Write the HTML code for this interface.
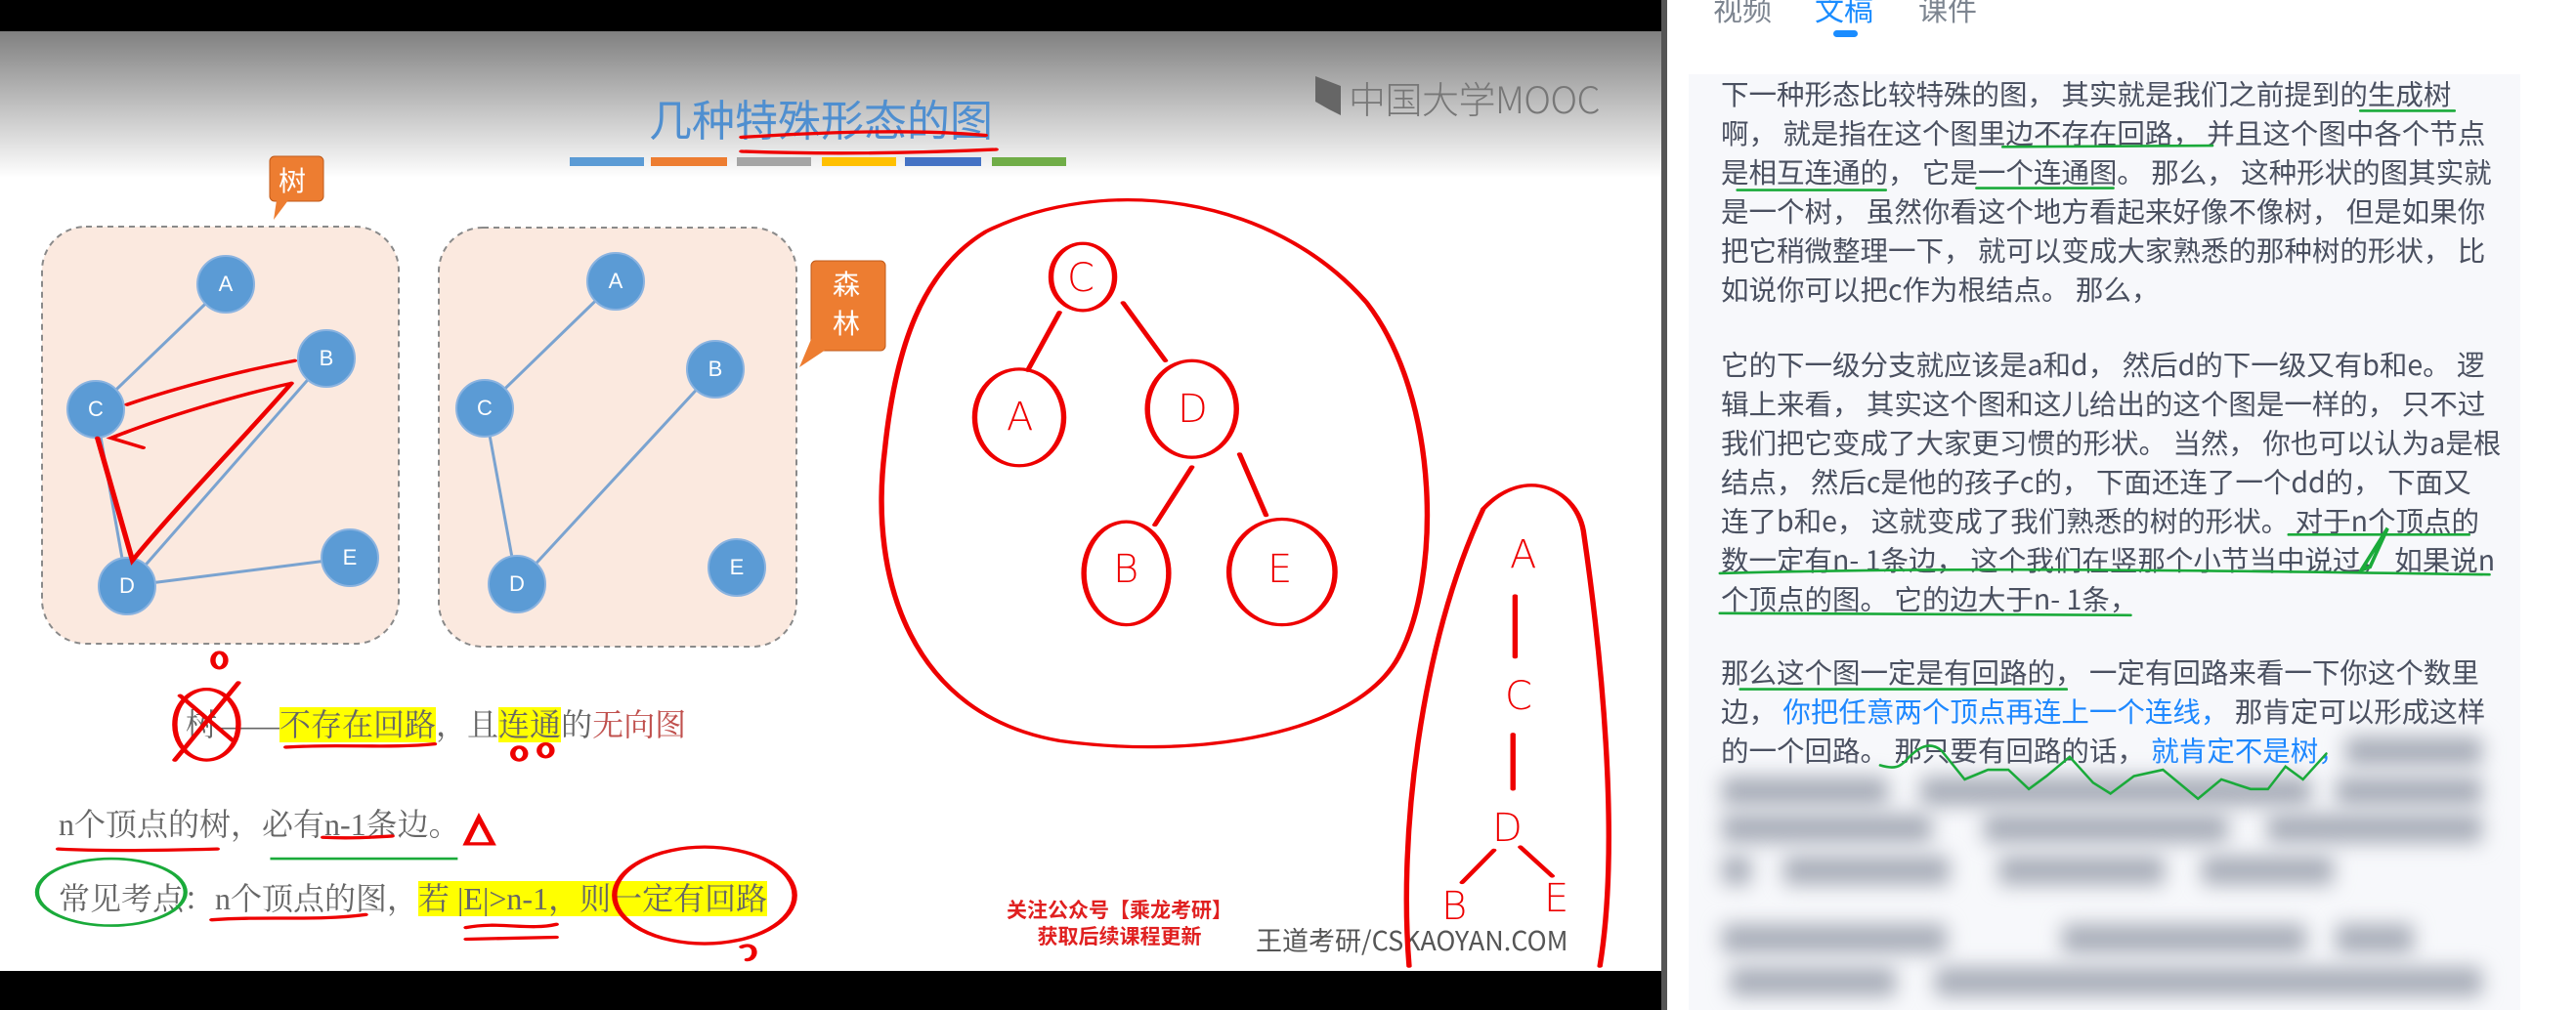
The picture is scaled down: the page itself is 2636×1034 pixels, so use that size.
<!DOCTYPE html>
<html><head><meta charset="utf-8"><style>
html,body{margin:0;padding:0}
body{width:2636px;height:1034px;position:relative;overflow:hidden;background:#fff;font-family:"Liberation Sans","Noto Sans CJK SC",sans-serif}
.a{position:absolute;white-space:nowrap}
.sl{font-family:"Liberation Serif","Noto Serif CJK SC",serif;color:#666;font-size:32px;line-height:36px}
.hl{background:#ffff00}
.ln{position:absolute;left:1761px;font-size:28.5px;line-height:40px;color:#4a5060;white-space:nowrap;font-family:"Noto Sans CJK SC",sans-serif}
.b{color:#1e88ff}
.nd{position:absolute;width:60px;height:60px;line-height:60px;text-align:center;color:#fff;font-size:22px}
.bl{position:absolute;background:#a9aeb9;filter:blur(10px);height:30px;border-radius:6px}
.hw{position:absolute;color:#e00;font-family:"DejaVu Sans",sans-serif;font-weight:300}
</style></head><body>
<div class="a" style="left:0;top:0;width:1700px;height:32px;background:#000"></div>
<div class="a" style="left:0;top:32px;width:1700px;height:150px;background:linear-gradient(#808080,#fff)"></div>
<div class="a" style="left:0;top:994px;width:1700px;height:40px;background:#000"></div>
<svg class="a" style="left:0;top:0" width="1700" height="1034">
<rect x="583" y="161" width="76" height="9" fill="#5b9bd5"/>
<rect x="666" y="161" width="78" height="9" fill="#ed7d31"/>
<rect x="754" y="161" width="76" height="9" fill="#a5a5a5"/>
<rect x="841" y="161" width="76" height="9" fill="#ffc000"/>
<rect x="926" y="161" width="78" height="9" fill="#4472c4"/>
<rect x="1015" y="161" width="76" height="9" fill="#70ad47"/>
<path d="M1346 78 L1372 88 L1372 118 L1360 112 L1346 104 Z" fill="#666"/>
<rect x="43" y="232" width="365" height="427" rx="45" fill="#fbe9df" stroke="#8a8a8a" stroke-width="2" stroke-dasharray="6 5"/>
<rect x="449" y="233" width="366" height="429" rx="45" fill="#fbe9df" stroke="#8a8a8a" stroke-width="2" stroke-dasharray="6 5"/>
<rect x="276" y="160" width="55" height="46" rx="5" fill="#ed7d31" stroke="#c05a1a"/>
<path d="M283 205 L280 225 L295 205 Z" fill="#ed7d31"/>
<rect x="830" y="267" width="76" height="92" rx="5" fill="#ed7d31" stroke="#c05a1a"/>
<path d="M831 345 L818 376 L845 358 Z" fill="#ed7d31"/>
<g stroke="#7aa3d0" stroke-width="3">
<line x1="231" y1="291" x2="98" y2="419"/><line x1="98" y1="419" x2="130" y2="600"/><line x1="130" y1="600" x2="334" y2="367"/><line x1="130" y1="600" x2="358" y2="571"/>
<line x1="630" y1="288" x2="496" y2="418"/><line x1="496" y1="418" x2="529" y2="598"/><line x1="529" y1="598" x2="732" y2="378"/>
</g>
<g fill="#5b9bd5" stroke="#8ab3e0" stroke-width="2">
<circle cx="231" cy="291" r="29"/><circle cx="334" cy="367" r="29"/><circle cx="98" cy="419" r="29"/><circle cx="130" cy="600" r="29"/><circle cx="358" cy="571" r="29"/>
<circle cx="630" cy="288" r="29"/><circle cx="732" cy="378" r="29"/><circle cx="496" cy="418" r="29"/><circle cx="529" cy="598" r="29"/><circle cx="754" cy="581" r="29"/>
</g>
</svg>
<div class="nd" style="left:201px;top:261px">A</div><div class="nd" style="left:304px;top:337px">B</div><div class="nd" style="left:68px;top:389px">C</div><div class="nd" style="left:100px;top:570px">D</div><div class="nd" style="left:328px;top:541px">E</div>
<div class="nd" style="left:600px;top:258px">A</div><div class="nd" style="left:702px;top:348px">B</div><div class="nd" style="left:466px;top:388px">C</div><div class="nd" style="left:499px;top:568px">D</div><div class="nd" style="left:724px;top:551px">E</div>
<div class="a" style="left:285px;top:164px;font-size:28px;color:#fff">树</div>
<div class="a" style="left:852px;top:272px;font-size:28px;line-height:40px;color:#fff;white-space:normal;width:32px">森林</div>
<div class="a" style="left:640px;top:88px;width:400px;text-align:center;font-size:44px;color:#4f8fd0;font-family:'Noto Sans CJK SC',sans-serif">几种特殊形态的图</div>
<div class="a" style="left:1380px;top:72px;font-size:38px;color:#777;font-family:'Noto Sans CJK SC',sans-serif;font-weight:300;letter-spacing:-0.5px">中国大学MOOC</div>
<div class="a sl" style="left:190px;top:724px">树——<span class="hl">不存在回路</span>，且<span class="hl">连通</span>的<span style="color:#c0504d">无向图</span></div>
<div class="a sl" style="left:60px;top:826px">n个顶点的树，必有n-1条边。</div>
<div class="a sl" style="left:60px;top:902px">常见考点：n个顶点的图，<span class="hl">若 |E|&gt;n-1，则一定有回路</span></div>
<div class="a" style="left:1030px;top:918px;font-size:21px;line-height:27px;color:#e02020;font-weight:bold;text-align:center;font-family:'Noto Sans CJK SC',sans-serif">关注公众号【乘龙考研】<br>获取后续课程更新</div>
<div class="a" style="left:1285px;top:942px;font-size:27px;color:#555;font-family:'Noto Sans CJK SC',sans-serif">王道考研/CSKAOYAN.COM</div>
<div class="hw" style="left:1092px;top:262px;font-size:40px">C</div>
<div class="hw" style="left:1030px;top:404px;font-size:40px">A</div>
<div class="hw" style="left:1205px;top:396px;font-size:40px">D</div>
<div class="hw" style="left:1139px;top:560px;font-size:40px">B</div>
<div class="hw" style="left:1297px;top:560px;font-size:40px">E</div>
<div class="hw" style="left:1545px;top:545px;font-size:40px">A</div>
<div class="hw" style="left:1540px;top:690px;font-size:40px">C</div>
<div class="hw" style="left:1527px;top:825px;font-size:40px">D</div>
<div class="hw" style="left:1475px;top:905px;font-size:40px">B</div>
<div class="hw" style="left:1580px;top:897px;font-size:40px">E</div>
<svg class="a" style="left:0;top:0" width="1700" height="1034" viewBox="0 0 1568 1568" preserveAspectRatio="none">
<g fill="none" stroke="#e00" stroke-width="5" stroke-linecap="round">
<path d="M700 213 C780 205 860 200 930 210 M700 235 C780 240 860 238 940 232"/>
<path d="M120 628 C170 600 230 575 278 560 M275 595 C220 615 150 650 105 680 L135 695 M275 595 C230 680 170 780 125 870 L92 680"/>
<ellipse cx="1022" cy="430" rx="30" ry="52"/><path d="M1000 485 L970 575 M1060 470 L1100 560"/>
<ellipse cx="962" cy="648" rx="42" ry="75"/><ellipse cx="1125" cy="635" rx="42" ry="75"/>
<path d="M1125 725 L1090 815 M1170 705 L1195 800"/>
<ellipse cx="1063" cy="890" rx="40" ry="80"/><ellipse cx="1210" cy="888" rx="50" ry="82"/>
<path d="M930 360 C1040 270 1200 300 1290 470 C1360 620 1360 900 1320 1020 C1280 1140 1130 1180 1000 1150 C860 1110 820 900 835 700 C845 540 870 420 930 360"/>
<path d="M1400 790 C1440 720 1490 760 1495 830 C1510 1000 1530 1300 1510 1500 M1330 1500 C1320 1300 1340 1000 1400 790"/>
<path d="M1430 925 L1430 1020 M1428 1140 L1428 1225 M1410 1320 L1380 1370 M1435 1315 L1465 1360"/>
<ellipse cx="195" cy="1125" rx="30" ry="55"/><path d="M165 1180 L225 1060 M170 1080 L220 1150"/>
<ellipse cx="207" cy="1025" rx="6" ry="12"/><ellipse cx="490" cy="1170" rx="6" ry="10"/><ellipse cx="515" cy="1165" rx="6" ry="10"/>
<path d="M270 1160 C320 1155 370 1162 410 1155 M55 1318 C100 1322 160 1320 205 1318 M305 1300 C330 1302 350 1300 370 1298"/>
<path d="M440 1310 L452 1270 L465 1310 Z"/>
<path d="M200 1428 C250 1422 300 1430 345 1420 M440 1440 C470 1430 500 1445 525 1435 M440 1458 L525 1455"/>
<ellipse cx="665" cy="1390" rx="85" ry="75"/><path d="M700 1470 C715 1460 715 1490 705 1490"/>
</g>
<path d="M255 1333 L432 1333" stroke="#1aaa3a" stroke-width="4"/>
<ellipse cx="105" cy="1385" rx="70" ry="52" fill="none" stroke="#1aaa3a" stroke-width="4"/>
</svg>
<div class="a" style="left:1700px;top:0;width:6px;height:1034px;background:#555"></div>
<div class="a" style="left:1753px;top:-14px;font-size:30px;color:#7d8590;font-family:'Noto Sans CJK SC',sans-serif">视频</div>
<div class="a" style="left:1857px;top:-14px;font-size:30px;color:#1a8cff;font-family:'Noto Sans CJK SC',sans-serif">文稿</div>
<div class="a" style="left:1963px;top:-14px;font-size:30px;color:#7d8590;font-family:'Noto Sans CJK SC',sans-serif">课件</div>
<div class="a" style="left:1876px;top:31px;width:25px;height:7px;border-radius:4px;background:#1a8cff"></div>
<div class="a" style="left:1728px;top:76px;width:851px;height:958px;background:#f7f8fb"></div>
<div class="ln" style="top:76px">下一种形态比较特殊的图， 其实就是我们之前提到的生成树</div>
<div class="ln" style="top:116px">啊， 就是指在这个图里边不存在回路， 并且这个图中各个节点</div>
<div class="ln" style="top:156px">是相互连通的， 它是一个连通图。 那么， 这种形状的图其实就</div>
<div class="ln" style="top:196px">是一个树， 虽然你看这个地方看起来好像不像树， 但是如果你</div>
<div class="ln" style="top:236px">把它稍微整理一下， 就可以变成大家熟悉的那种树的形状， 比</div>
<div class="ln" style="top:276px">如说你可以把c作为根结点。 那么，</div>
<div class="ln" style="top:353px">它的下一级分支就应该是a和d， 然后d的下一级又有b和e。 逻</div>
<div class="ln" style="top:393px">辑上来看， 其实这个图和这儿给出的这个图是一样的， 只不过</div>
<div class="ln" style="top:433px">我们把它变成了大家更习惯的形状。 当然， 你也可以认为a是根</div>
<div class="ln" style="top:473px">结点， 然后c是他的孩子c的， 下面还连了一个dd的， 下面又</div>
<div class="ln" style="top:513px">连了b和e， 这就变成了我们熟悉的树的形状。 对于n个顶点的</div>
<div class="ln" style="top:553px">数一定有n- 1条边， 这个我们在竖那个小节当中说过， 如果说n</div>
<div class="ln" style="top:593px">个顶点的图。 它的边大于n- 1条，</div>
<div class="ln" style="top:668px">那么这个图一定是有回路的， 一定有回路来看一下你这个数里</div>
<div class="ln" style="top:708px">边， <span class="b">你把任意两个顶点再连上一个连线，</span> 那肯定可以形成这样</div>
<div class="ln" style="top:748px">的一个回路。 那只要有回路的话， <span class="b">就肯定不是树，</span></div>
<div class="bl" style="left:2400px;top:754px;width:140px"></div>
<div class="bl" style="left:1762px;top:795px;width:170px"></div><div class="bl" style="left:1965px;top:795px;width:400px"></div><div class="bl" style="left:2390px;top:795px;width:150px"></div>
<div class="bl" style="left:1762px;top:833px;width:215px"></div><div class="bl" style="left:2030px;top:833px;width:250px"></div><div class="bl" style="left:2320px;top:833px;width:220px"></div>
<div class="bl" style="left:1762px;top:876px;width:30px"></div><div class="bl" style="left:1825px;top:876px;width:170px"></div><div class="bl" style="left:2045px;top:876px;width:170px"></div><div class="bl" style="left:2253px;top:876px;width:135px"></div>
<div class="bl" style="left:1762px;top:946px;width:230px"></div><div class="bl" style="left:2110px;top:946px;width:250px"></div><div class="bl" style="left:2390px;top:946px;width:80px"></div>
<div class="bl" style="left:1770px;top:990px;width:170px"></div><div class="bl" style="left:1980px;top:990px;width:560px"></div>
<svg class="a" style="left:1700px;top:0" width="936" height="1034" viewBox="0 0 1568 1568" preserveAspectRatio="none">
<g fill="none" stroke="#1aaa3a" stroke-width="4" stroke-linecap="round">
<path d="M1198 172 L1360 172 M585 228 L945 226 M130 295 L385 295 M540 292 L775 292 M1075 830 L1385 830"/>
<path d="M100 890 C500 880 900 885 1420 892 M100 952 L805 955 M135 1070 L695 1070"/>
<path d="M375 1188 C400 1195 410 1190 420 1180 C440 1160 460 1150 480 1165 L520 1210 L560 1195 L595 1195 L630 1225 L660 1205 L700 1175 L740 1215 L770 1232 L810 1205 L860 1195 L920 1240 L960 1210 L1010 1225 L1040 1225 L1070 1190 L1100 1210 L1140 1170"/>
<path d="M1200 885 L1245 820 L1215 880 Z" stroke-width="6"/>
</g>
</svg>
</body></html>
